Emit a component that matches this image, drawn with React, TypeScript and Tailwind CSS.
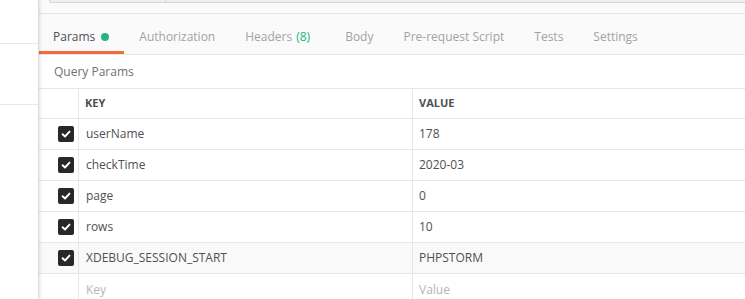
import React from "react";

type Param = { key: string; value: string; hover?: boolean };

const params: Param[] = [
  { key: "userName", value: "178" },
  { key: "checkTime", value: "2020-03" },
  { key: "page", value: "0" },
  { key: "rows", value: "10" },
  { key: "XDEBUG_SESSION_START", value: "PHPSTORM", hover: true },
];

const tabs = ["Authorization", "Headers", "Body", "Pre-request Script", "Tests", "Settings"];

function CheckBox() {
  return (
    <span className="flex h-[16px] w-[16px] items-center justify-center rounded-[2px] bg-[#282828]">
      <svg width="10" height="10" viewBox="0 0 10 10" aria-hidden="true">
        <path d="M1.6 5.2 4 7.5 8.5 2.6" fill="none" stroke="#fff" strokeWidth="1.9" strokeLinecap="round" strokeLinejoin="round" />
      </svg>
    </span>
  );
}

function Row({ p }: { p: Param }) {
  return (
    <div className={`flex h-[31px] border-b border-[#e6e6e6] ${p.hover ? "bg-[#f9f9f9]" : "bg-white"}`}>
      <div className="flex w-[39px] items-center justify-end pr-[4px]">
        <CheckBox />
      </div>
      <div className="flex w-[334px] items-center border-l border-[#e6e6e6] pl-[7px] text-[#505050]">{p.key}</div>
      <div className="flex flex-1 items-center border-l border-[#e6e6e6] pl-[6px] text-[#505050]">{p.value}</div>
    </div>
  );
}

export default function App() {
  return (
    <div className="flex h-[299px] w-[745px] overflow-hidden bg-white font-['Open_Sans',sans-serif] text-[12px]">
      <aside className="relative z-10 w-[39px] shrink-0 border-r border-[#dcdcdc] bg-white shadow-[1px_0_3px_rgba(0,0,0,0.12)]">
        <div className="h-[44px] border-b border-[#e8e8e8]" />
        <div className="h-[61px] border-b border-[#e8e8e8]" />
      </aside>

      <main className="min-w-0 flex-1">
        <div className="h-[13px] bg-[#fafafa]">
          <div className="ml-[10px] flex h-[3px] rounded-bl-[3px] border-b border-l border-[#d6d6d6] bg-[#efefef]">
            <div className="w-[116px] border-r border-[#d6d6d6]" />
          </div>
        </div>

        <nav className="flex h-[42px] items-stretch border-y border-[#e6e6e6] bg-[#fafafa]">
          <div className="flex items-center gap-[6px] border-b-[3px] border-[#f26b3a] pl-[14px] pr-[15px] pt-[8px] text-[#505050]">
            Params
            <span className="h-[8px] w-[8px] rounded-full bg-[#26b47f]" />
          </div>
          {tabs.map((t) => (
            <div key={t} className="flex items-center px-[15px] pt-[5px] text-[#a3a3a3]">
              {t}
              {t === "Headers" && <span className="ml-[4px] mr-[5px] text-[#26b47f]">(8)</span>}
            </div>
          ))}
        </nav>

        <div className="flex h-[33px] items-center pl-[15px] pt-[1px] text-[#707070]">Query Params</div>

        <section className="border-t border-[#e6e6e6]">
          <div className="flex h-[30px] border-b border-[#e6e6e6] text-[11px] font-bold text-[#505050]">
            <div className="w-[39px]" />
            <div className="flex w-[334px] items-center border-l border-[#e6e6e6] pl-[6px]">KEY</div>
            <div className="flex flex-1 items-center border-l border-[#e6e6e6] pl-[6px]">VALUE</div>
          </div>
          {params.map((p) => (
            <Row key={p.key} p={p} />
          ))}
          <div className="flex h-[31px]">
            <div className="w-[39px]" />
            <div className="flex w-[334px] items-center border-l border-[#e6e6e6] pl-[7px] text-[#b5b5b5]">Key</div>
            <div className="flex flex-1 items-center border-l border-[#e6e6e6] pl-[6px] text-[#b5b5b5]">Value</div>
          </div>
        </section>
      </main>
    </div>
  );
}
